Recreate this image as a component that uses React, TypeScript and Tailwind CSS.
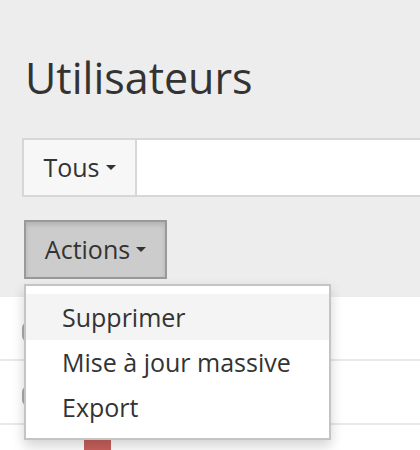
import React from 'react';

function Caret() {
  return <span className="ml-[6px] inline-block h-0 w-0 border-x-[5px] border-t-[5px] border-x-transparent border-t-[#333] align-middle" />;
}

const rows = [0, 1];

export default function App() {
  return (
    <div className="relative min-h-screen bg-white text-[#333]" style={{ fontFamily: '"Open Sans", "Liberation Sans", sans-serif' }}>
      {/* Page header */}
      <div className="bg-[#ededed] px-[22px] pt-[51px] pb-[18px]">
        <h1 className="pl-[3px] text-[43px] leading-[54px] font-normal">Utilisateurs</h1>

        {/* Filter bar */}
        <div className="mt-[33px] mr-[-22px] flex h-[59px] border-y-2 border-l-2 border-[#d6d8d8]">
          <button className="flex w-[113px] items-center justify-center border-r-2 border-[#d6d8d8] bg-[#f7f7f7] text-[25px]">
            Tous
            <Caret />
          </button>
          <div className="flex-1 bg-white" />
        </div>

        {/* Actions */}
        <button className="mt-[23px] ml-[2px] flex h-[59px] w-[143px] items-center justify-center border-2 border-[#999] bg-[#cccccc] text-[25px] shadow-[inset_0_3px_5px_rgba(0,0,0,0.125)]">
          Actions
          <Caret />
        </button>
      </div>

      {/* Table */}
      <div>
        {rows.map((r) => (
          <div key={r} className="flex h-[64px] items-center border-b-2 border-[#e6e9e9] pl-[22px]">
            <span className="mt-[8px] h-[20px] w-[20px] rounded-[6px] border-2 border-[#aaa] bg-white" />
          </div>
        ))}
        <div className="flex items-start pl-[84px] pt-[15px]">
          <span className="h-[27px] w-[27px] shrink-0 bg-[#c9605c]" />
          <span className="ml-[14px] mt-[4px] whitespace-nowrap text-[25px] text-[#888]">Benoît CHAMALY</span>
        </div>
      </div>

      {/* Dropdown menu */}
      <ul className="absolute top-[284px] left-[24px] w-[307px] border-2 border-[#c4c4c4] bg-white py-[8px] text-[25px] shadow-[0_6px_12px_rgba(0,0,0,0.175)]">
        <li className="bg-[#f4f4f4] px-[36px] leading-[46px]">Supprimer</li>
        <li className="px-[36px] leading-[45px]">Mise à jour massive</li>
        <li className="px-[36px] leading-[45px]">Export</li>
      </ul>
    </div>
  );
}
